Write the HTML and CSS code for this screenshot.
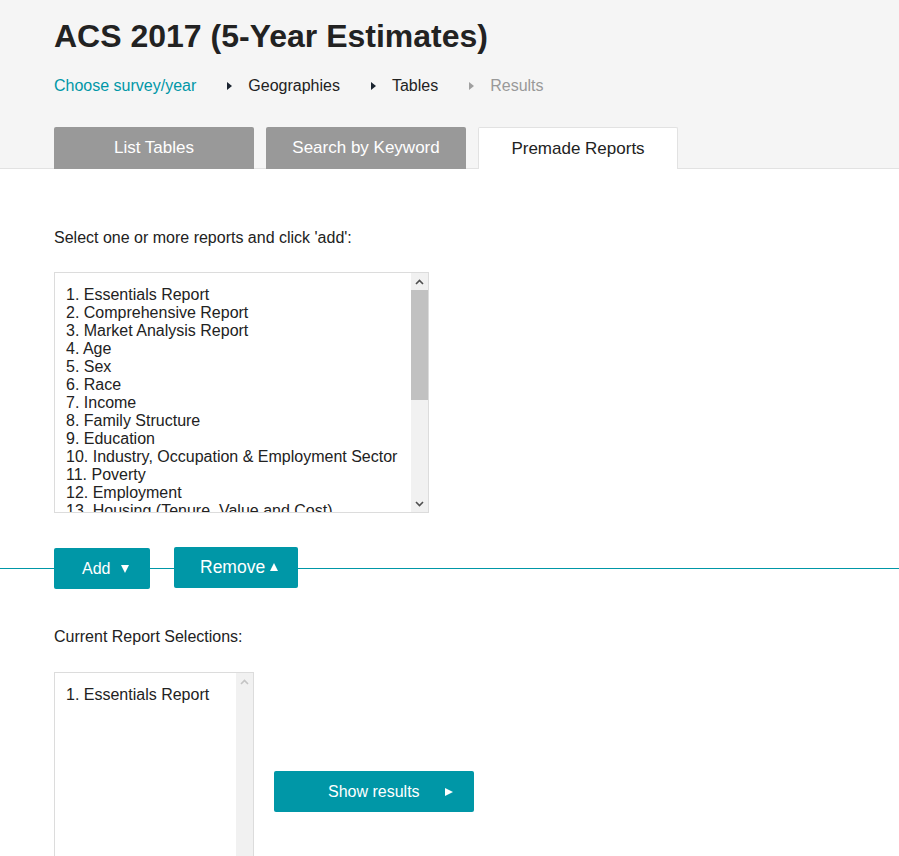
FILE: index.html
```html
<!DOCTYPE html>
<html lang="en">
<head>
<meta charset="utf-8">
<title>ACS 2017 (5-Year Estimates)</title>
<link rel="stylesheet" href="styles.css">
</head>
<body>
<header class="top">
  <h1 class="title">ACS 2017 (5-Year Estimates)</h1>
  <nav class="crumbs">
    <a class="crumb link" href="#">Choose survey/year</a>
    <span class="sep"></span>
    <span class="crumb">Geographies</span>
    <span class="sep"></span>
    <span class="crumb">Tables</span>
    <span class="sep sep-muted"></span>
    <span class="crumb muted">Results</span>
  </nav>
  <div class="tabs">
    <div class="tab">List Tables</div>
    <div class="tab">Search by Keyword</div>
    <div class="tab active">Premade Reports</div>
  </div>
</header>
<main class="content">
  <p class="label">Select one or more reports and click 'add':</p>
  <div class="listbox big">
    <ul class="items">
      <li>1. Essentials Report</li>
      <li>2. Comprehensive Report</li>
      <li>3. Market Analysis Report</li>
      <li>4. Age</li>
      <li>5. Sex</li>
      <li>6. Race</li>
      <li>7. Income</li>
      <li>8. Family Structure</li>
      <li>9. Education</li>
      <li>10. Industry, Occupation &amp; Employment Sector</li>
      <li>11. Poverty</li>
      <li>12. Employment</li>
      <li>13. Housing (Tenure, Value and Cost)</li>
    </ul>
    <div class="sbar">
      <div class="sbtn"><svg width="9" height="6" viewBox="0 0 9 6"><path d="M1 5 L4.5 1.5 L8 5" fill="none" stroke="#505050" stroke-width="1.6"/></svg></div>
      <div class="thumb"></div>
      <div class="track"></div>
      <div class="sbtn"><svg width="9" height="6" viewBox="0 0 9 6"><path d="M1 1 L4.5 4.5 L8 1" fill="none" stroke="#505050" stroke-width="1.6"/></svg></div>
    </div>
  </div>
  <div class="actions">
    <button class="btn btn-add">Add <span class="tri-down"></span></button>
    <button class="btn btn-remove">Remove<span class="tri-up"></span></button>
  </div>
  <p class="label label-current">Current Report Selections:</p>
  <div class="results-row">
    <div class="listbox small">
      <ul class="items">
        <li>1. Essentials Report</li>
      </ul>
      <div class="sbar">
        <div class="sbtn"><svg width="9" height="6" viewBox="0 0 9 6"><path d="M1 5 L4.5 1.5 L8 5" fill="none" stroke="#c4c4c4" stroke-width="1.6"/></svg></div>
        <div class="track"></div>
      </div>
    </div>
    <button class="btn btn-show">Show results <span class="tri-right"></span></button>
  </div>
</main>
</body>
</html>
```
FILE: styles.css
```css
* { box-sizing: border-box; }
html, body { margin: 0; padding: 0; }
body {
  font-family: "Liberation Sans", Arial, sans-serif;
  color: #333;
  background: #fff;
  font-size: 16px;
}
.top {
  background: #f5f5f5;
  border-bottom: 1px solid #e2e2e2;
  padding: 18px 0 0 54px;
}
.title {
  margin: 0;
  font-size: 32px;
  line-height: 37px;
  font-weight: bold;
  color: #222;
}
.crumbs {
  margin-top: 22px;
  display: flex;
  align-items: center;
  line-height: 18px;
  font-size: 16px;
}
.crumb { color: #222; text-decoration: none; }
.crumb.link { color: #0097a7; }
.crumb.muted { color: #999; }
.sep {
  width: 0; height: 0;
  border-top: 4px solid transparent;
  border-bottom: 4px solid transparent;
  border-left: 5px solid #1b2430;
  margin: 0 16px 0 31px;
}
.sep.sep-muted { border-left-color: #a0a0a0; }
.tabs {
  display: flex;
  gap: 12px;
  margin-top: 32px;
  margin-bottom: -1px;
}
.tab {
  width: 200px;
  height: 42px;
  background: #999;
  color: #fff;
  font-size: 17px;
  display: flex;
  align-items: center;
  justify-content: center;
  border-radius: 2px 2px 0 0;
}
.tab.active {
  background: #fff;
  color: #222;
  border: 1px solid #e2e2e2;
  border-bottom: none;
}
.content { padding: 60px 0 0 0; }
.label {
  margin: 0 0 25px 54px;
  line-height: 18px;
  font-size: 16px;
  color: #222;
}
.label-current { margin-top: 39px; margin-bottom: 26px; }
.listbox {
  display: flex;
  border: 1px solid #dcdcdc;
  height: 241px;
  background: #fff;
  overflow: hidden;
}
.listbox.big { width: 375px; margin-left: 54px; }
.listbox.small { width: 200px; }
.items {
  list-style: none;
  margin: 0;
  padding: 13px 0 0 11px;
  flex: 1;
  overflow: hidden;
  line-height: 18px;
  font-size: 16px;
  color: #222;
  white-space: nowrap;
}
.small .items { padding-top: 13px; }
.sbar {
  width: 17px;
  flex: none;
  display: flex;
  flex-direction: column;
  background: #f1f1f1;
}
.sbtn {
  height: 17px;
  flex: none;
  display: flex;
  align-items: center;
  justify-content: center;
}
.thumb { height: 110px; background: #c1c1c1; flex: none; }
.track { flex: 1; }
.actions {
  margin-top: 34px;
  height: 42px;
  padding-left: 54px;
  display: flex;
  align-items: flex-start;
  gap: 24px;
  background: linear-gradient(#0097a7, #0097a7) 0 21px / 100% 1px no-repeat;
}
.btn {
  font-family: "Liberation Sans", Arial, sans-serif;
  background: #0097a7;
  color: #fff;
  border: none;
  border-radius: 2px;
  height: 41px;
  display: flex;
  align-items: center;
  padding: 0;
  cursor: pointer;
}
.btn-add {
  width: 96px;
  margin-top: 1px;
  font-size: 16px;
  padding-left: 28px;
  padding-top: 1px;
}
.btn-remove {
  width: 124px;
  font-size: 17.5px;
  padding-left: 26px;
  padding-bottom: 1px;
}
.tri-down {
  width: 0; height: 0;
  border-left: 4.5px solid transparent;
  border-right: 4.5px solid transparent;
  border-top: 8px solid #fff;
  margin-left: 11px;
}
.tri-up {
  width: 0; height: 0;
  border-left: 4.5px solid transparent;
  border-right: 4.5px solid transparent;
  border-bottom: 8px solid #fff;
  margin-left: 5px;
}
.results-row {
  display: flex;
  align-items: center;
  gap: 20px;
  padding-left: 54px;
}
.btn-show {
  width: 200px;
  font-size: 16px;
  padding-left: 54px;
  margin-bottom: 2px;
}
.tri-right {
  width: 0; height: 0;
  border-top: 4.5px solid transparent;
  border-bottom: 4.5px solid transparent;
  border-left: 8px solid #fff;
  margin-left: 25px;
}
```
